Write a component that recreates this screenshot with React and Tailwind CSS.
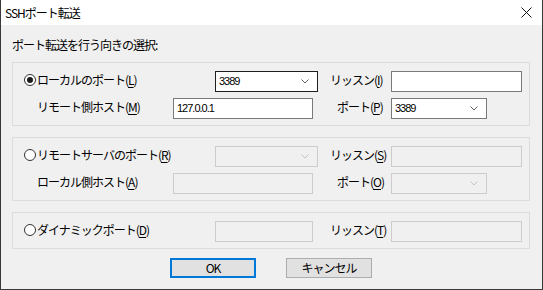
import React from "react"

const jp = "font-['Noto_Sans_CJK_JP','Noto_Sans',sans-serif] tracking-[-1px]"

const Mn = ({ text, k }) => (
  <span className="whitespace-nowrap">
    {text}(<span className="underline underline-offset-2">{k}</span>)
  </span>
)

const Radio = ({ checked }) => (
  <span className="w-[12px] h-[12px] rounded-full border border-[#333] bg-white flex items-center justify-center shrink-0">
    {checked && <span className="w-[6px] h-[6px] rounded-full bg-[#1a1a1a]" />}
  </span>
)

const Chevron = ({ color }) => (
  <svg width="8" height="5" viewBox="0 0 8 5" className="shrink-0">
    <polyline points="0.5,0.5 4,4 7.5,0.5" fill="none" stroke={color} strokeWidth="1" />
  </svg>
)

const Combo = ({ value, width, disabled, focus }) => {
  const border = disabled ? "border-[#cccccc]" : focus ? "border-[#1e1e1e]" : "border-[#7a7a7a]"
  return (
    <div
      className={`h-[21px] border ${border} ${disabled ? "bg-[#f0f0f0]" : "bg-white"} flex items-center justify-between pl-[3px] pr-[8px] shrink-0`}
      style={{ width }}
    >
      <span className="font-['Liberation_Sans',sans-serif] text-[11px] text-black leading-none">{value}</span>
      <Chevron color={disabled ? "#c4c4c4" : "#606060"} />
    </div>
  )
}

const Field = ({ value, width, disabled }) => (
  <div
    className={`h-[21px] border ${disabled ? "border-[#cccccc] bg-[#f0f0f0]" : "border-[#7a7a7a] bg-white"} flex items-center pl-[3px] shrink-0`}
    style={{ width }}
  >
    <span className="font-['Liberation_Sans',sans-serif] text-[11px] text-black leading-none">{value}</span>
  </div>
)

const Group = ({ children }) => (
  <div className="border border-[#dcdcdc] pt-[8px] pb-[6px] pl-[11px] flex flex-col gap-[6px]">
    {children}
  </div>
)

const Row = ({ children }) => <div className="flex items-center h-[21px]">{children}</div>

export default function App() {
  return (
    <div className={`w-[543px] h-[290px] bg-[#f0f0f0] border-x border-b border-[#3a3a3a] flex flex-col text-[12px] text-black ${jp}`}>
      <div className="h-[25px] bg-white flex items-center justify-between pl-[4px] pr-[10px] shrink-0">
        <span className="leading-none">SSHポート転送</span>
        <svg width="11" height="11" viewBox="0 0 11 11">
          <path d="M0.5 0.5 L10.5 10.5 M10.5 0.5 L0.5 10.5" stroke="#111" strokeWidth="1" />
        </svg>
      </div>

      <div className="pl-[11px] pr-[12px] flex flex-col">
        <div className="mt-[12px] h-[16px] leading-[16px]">ポート転送を行う向きの選択:</div>

        <div className="mt-[9px]">
          <Group>
            <Row>
              <div className="w-[191px] flex items-center gap-[1px] pb-[3px]">
                <Radio checked />
                <Mn text="ローカルのポート" k="L" />
              </div>
              <Combo value="3389" width={103} focus />
              <div className="w-[73px] pl-[12px] pb-[3px]"><Mn text="リッスン" k="I" /></div>
              <Field value="" width={131} />
            </Row>
            <Row>
              <div className="w-[149px] pl-[13px] pb-[3px]"><Mn text="リモート側ホスト" k="M" /></div>
              <Field value="127.0.0.1" width={140} />
              <div className="w-[78px] pl-[24px] pb-[3px]"><Mn text="ポート" k="P" /></div>
              <Combo value="3389" width={96} />
            </Row>
          </Group>
        </div>

        <div className="mt-[11px]">
          <Group>
            <Row>
              <div className="w-[191px] flex items-center gap-[1px] pb-[3px]">
                <Radio />
                <Mn text="リモートサーバのポート" k="R" />
              </div>
              <Combo value="" width={103} disabled />
              <div className="w-[73px] pl-[12px] pb-[3px]"><Mn text="リッスン" k="S" /></div>
              <Field value="" width={131} disabled />
            </Row>
            <Row>
              <div className="w-[149px] pl-[13px] pb-[3px]"><Mn text="ローカル側ホスト" k="A" /></div>
              <Field value="" width={140} disabled />
              <div className="w-[78px] pl-[24px] pb-[3px]"><Mn text="ポート" k="O" /></div>
              <Combo value="" width={96} disabled />
            </Row>
          </Group>
        </div>

        <div className="mt-[11px]">
          <Group>
            <Row>
              <div className="w-[191px] flex items-center gap-[1px] pb-[3px]">
                <Radio />
                <Mn text="ダイナミックポート" k="D" />
              </div>
              <Field value="" width={98} disabled />
              <div className="w-[78px] pl-[17px] pb-[3px]"><Mn text="リッスン" k="T" /></div>
              <Field value="" width={131} disabled />
            </Row>
          </Group>
        </div>

        <div className="mt-[9px] flex justify-center gap-[30px]">
          <button className="w-[86px] h-[20px] bg-[#e1e1e1] border-2 border-[#0078d7] flex items-center justify-center leading-none">OK</button>
          <button className="w-[86px] h-[20px] bg-[#e1e1e1] border border-[#adadad] flex items-center justify-center leading-none">キャンセル</button>
        </div>
      </div>
    </div>
  )
}
